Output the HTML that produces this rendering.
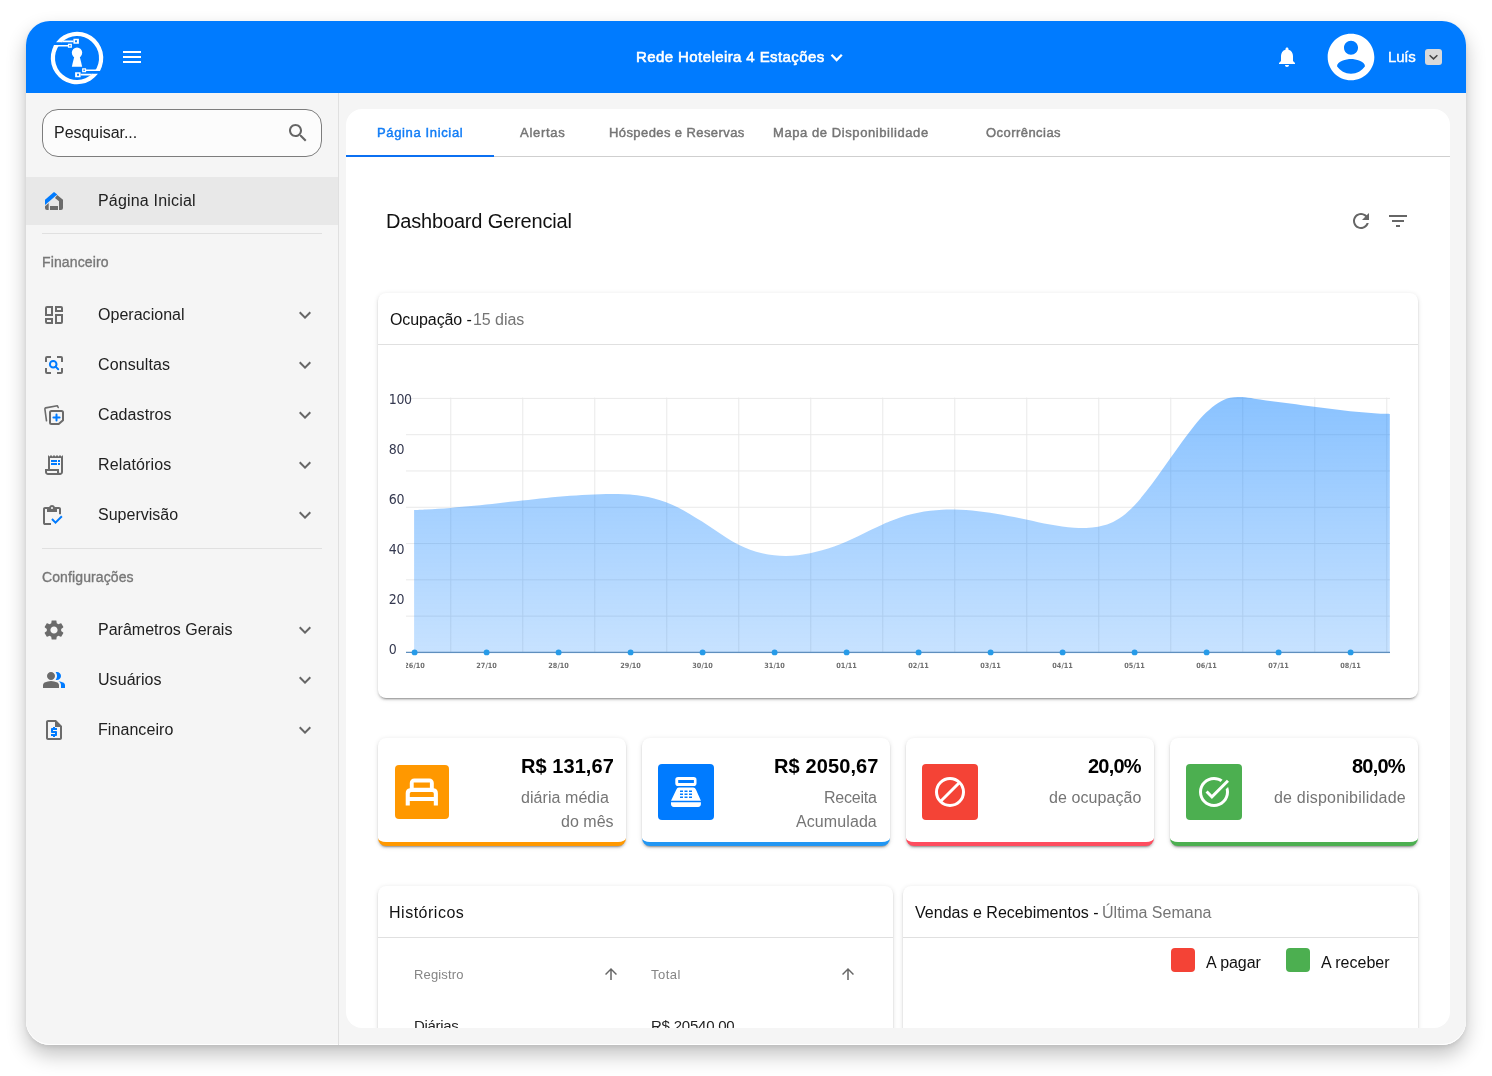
<!DOCTYPE html>
<html lang="pt-BR"><head><meta charset="utf-8"><title>Dashboard Gerencial</title>
<style>
html,body{margin:0;padding:0}
body{width:1492px;height:1076px;overflow:hidden;background:#fff;position:relative;font-family:"Liberation Sans",Arial,sans-serif;color:#212121}
.win{position:absolute;left:26px;top:21px;width:1440px;height:1024px;border-radius:24px;overflow:hidden;background:#f5f5f5;box-shadow:inset 0 -1px 0 #fff}
.shadow{position:absolute;left:26px;top:21px;width:1440px;height:1024px;border-radius:24px;box-shadow:0 10px 20px rgba(0,0,0,.24),0 2px 4px rgba(0,0,0,.08)}
.a{position:absolute}
.t{will-change:transform;position:absolute;white-space:nowrap;line-height:1;margin:0;font-weight:400}
.ic{position:absolute;display:block;overflow:visible}
.pb{display:inline-block;width:0;height:0}
.gs{will-change:transform}
</style></head>
<body>
<div class="shadow"></div>
<div class="win">
<header class="a" style="left:0px;top:0px;width:1440px;height:72px;background:#007bff"><svg class="ic" style="left:20.75px;top:6.5px;width:60px;height:60px" viewBox="-30 -30 60 60"><g fill="#fff"><path d="M-20.92 -15.85A26.25 26.25 0 0 1 22.83 12.96L17.78 12.96A22.0 22.0 0 0 0 -15.26 -15.85Z"/><path d="M-15.76 -15.85L-13.24 -17.57H-3.5V-15.85Z"/><path fill-rule="evenodd" d="M-3.6-19.3h5.5v5.1h-5.5zM-1.95-17.7v1.9h1.9v-1.9z"/><path d="M8.8 11.5H23.6L22.83 12.96H8.8Z"/><path fill-rule="evenodd" d="M5.1 10.35h4v3.8h-4zM6.45 11.6v1.3h1.3v-1.3z"/><g transform="rotate(180)"><path d="M-20.92 -15.85A26.25 26.25 0 0 1 22.83 12.96L17.78 12.96A22.0 22.0 0 0 0 -15.26 -15.85Z"/><path d="M-15.76 -15.85L-13.24 -17.57H-3.5V-15.85Z"/><path fill-rule="evenodd" d="M-3.6-19.3h5.5v5.1h-5.5zM-1.95-17.7v1.9h1.9v-1.9z"/><path d="M8.8 11.5H23.6L22.83 12.96H8.8Z"/><path fill-rule="evenodd" d="M5.1 10.35h4v3.8h-4zM6.45 11.6v1.3h1.3v-1.3z"/></g><circle cx="0" cy="-5.2" r="5.2"/><path d="M-2.7-1.5h5.4L5.2 8.65H-5.2Z"/></g></svg><svg class="ic" style="left:94px;top:24px;width:24px;height:24px" viewBox="0 0 24 24" ><path d="M3 18h18v-2H3v2zm0-5h18v-2H3v2zm0-7v2h18V6H3z" fill="#fff"/></svg><span class="t" style="left:610px;top:28px;font-size:15px;color:#fff;letter-spacing:0.41px;-webkit-text-stroke:0.6px currentColor">Rede Hoteleira 4 Estações</span><svg class="ic" style="left:802px;top:29px;width:18px;height:16px" viewBox="828 50 18 16"><path d="M831.5 54.7l5.15 5.3 5.15-5.3" fill="none" stroke="#fff" stroke-width="2.3"/></svg><svg class="ic" style="left:1249px;top:24px;width:24px;height:24px" viewBox="0 0 24 24" ><path d="M12 22c1.100 0 2-.9 2-2h-4c0 1.100.89 2 2 2zm6-6v-5c0-3.070-1.640-5.640-4.500-6.320V4c0-.83-.67-1.500-1.500-1.500s-1.500.67-1.500 1.500v.68C7.630 5.360 6 7.920 6 11v5l-2 2v1h16v-1l-2-2z" fill="#fff"/></svg><svg class="ic" style="left:1297px;top:8px;width:56px;height:56px" viewBox="0 0 24 24" ><path d="M12 2C6.480 2 2 6.480 2 12s4.480 10 10 10 10-4.480 10-10S17.520 2 12 2zm0 3c1.660 0 3 1.340 3 3s-1.340 3-3 3-3-1.340-3-3 1.340-3 3-3zm0 14.200c-2.500 0-4.710-1.280-6-3.220.03-1.990 4-3.080 6-3.080 1.990 0 5.970 1.090 6 3.080-1.290 1.940-3.500 3.220-6 3.220z" fill="#fff"/></svg><span class="t" style="left:1362px;top:28px;font-size:15px;color:#fff;letter-spacing:-0.21px;-webkit-text-stroke:0.4px currentColor">Luís</span><div class="a" style="left:1399px;top:28px;width:17px;height:16px;background:#d9d9d9;border-radius:3px"><svg class="ic" style="left:0;top:0;width:17px;height:16px" viewBox="0 0 17 16"><path d="M4.6 6.3l3.9 3.6 3.9-3.6" fill="none" stroke="#444" stroke-width="1.5"/></svg></div></header><nav class="a" style="left:0px;top:72px;width:313px;height:952px;border-right:1px solid #e0e0e0;box-sizing:border-box"><div class="a" style="left:16px;top:16px;width:280px;height:48px;border:1px solid #7d7d7d;border-radius:16px;background:#fcfcfc;box-sizing:border-box"></div><span class="t" style="left:28px;top:32px;font-size:16px;color:#212121;letter-spacing:-0.04px">Pesquisar...</span><svg class="ic" style="left:260.2px;top:28.3px;width:24px;height:24px" viewBox="0 0 24 24" ><path d="M15.500 14h-.79l-.28-.27C15.410 12.590 16 11.110 16 9.500 16 5.910 13.090 3 9.500 3S3 5.910 3 9.500 5.910 16 9.500 16c1.610 0 3.090-.59 4.230-1.570l.27.28v.79l5 4.990L20.490 19l-4.990-5zm-6 0C7.010 14 5 11.990 5 9.500S7.010 5 9.500 5 14 7.010 14 9.500 11.990 14 9.500 14z" fill="#666"/></svg><div class="a" style="left:0px;top:84px;width:312px;height:48px;background:#e8e8e8"></div><svg class="ic" style="left:16px;top:96px;width:24px;height:24px" viewBox="0 0 24 24" ><path fill="#007bff" d="M3 15.9V10.7L12 3l3.25 2.6Z"/><path fill="#6b6b6b" d="M15.2 6.1L21 10.7V19a2 2 0 0 1-2 2h-2V12.3L13 9Z"/><path fill="#6b6b6b" d="M3 17.2l3.7-3.1V21H5a2 2 0 0 1-2-2Z"/><path fill="#6b6b6b" d="M8 17h8v4H8Z"/></svg><span class="t" style="left:72px;top:100px;font-size:16px;color:#212121;letter-spacing:0.19px">Página Inicial</span><div class="a" style="left:16px;top:140px;width:280px;height:1px;background:#e0e0e0"></div><span class="t" style="left:16px;top:162px;font-size:14px;color:#777;letter-spacing:0.13px;-webkit-text-stroke:0.35px currentColor">Financeiro</span><svg class="ic" style="left:16.15px;top:210.1px;width:24px;height:24px" viewBox="0 0 24 24" ><path fill="none" stroke="#6b6b6b" stroke-width="2" d="M10 4H5a1 1 0 0 0-1 1v7h6Z"/><path fill="none" stroke="#6b6b6b" stroke-width="2" d="M14 4h5a1 1 0 0 1 1 1v3h-6Z"/><path fill="none" stroke="#6b6b6b" stroke-width="2" d="M14 12h6v7a1 1 0 0 1-1 1h-5Z"/><path fill="none" stroke="#6b6b6b" stroke-width="2" d="M4 16h6v4H5a1 1 0 0 1-1-1Z"/></svg><span class="t" style="left:72px;top:214px;font-size:16px;color:#212121;letter-spacing:0.03px">Operacional</span><svg class="ic" style="left:267px;top:209.8px;width:24px;height:24px" viewBox="0 0 24 24" ><path d="M16.590 8.590L12 13.170 7.410 8.590 6 10l6 6 6-6z" fill="#666"/></svg><svg class="ic" style="left:16.15px;top:260.1px;width:24px;height:24px" viewBox="0 0 24 24" ><path fill="none" stroke="#6b6b6b" stroke-width="2" d="M4 9V5a1 1 0 0 1 1-1h4M15 4h4a1 1 0 0 1 1 1v4M20 15v4a1 1 0 0 1-1 1h-4M9 20H5a1 1 0 0 1-1-1v-4"/><circle cx="11.2" cy="11.2" r="3.3" fill="none" stroke="#007bff" stroke-width="2"/><path d="M13.600 13.600l2.600 2.600" fill="none" stroke="#007bff" stroke-width="2" stroke-linecap="round"/></svg><span class="t" style="left:72px;top:264px;font-size:16px;color:#212121;letter-spacing:0.12px">Consultas</span><svg class="ic" style="left:267px;top:259.8px;width:24px;height:24px" viewBox="0 0 24 24" ><path d="M16.590 8.590L12 13.170 7.410 8.590 6 10l6 6 6-6z" fill="#666"/></svg><svg class="ic" style="left:16px;top:310.1px;width:24px;height:24px" viewBox="0 0 24 24" ><path fill="none" stroke="#6b6b6b" stroke-width="2" stroke-linejoin="round" d="M9.500 8H19.500a1.500 1.500 0 0 1 1.500 1.500V17.200L16.700 21H9.500A1.500 1.500 0 0 1 8 19.500V9.500A1.500 1.500 0 0 1 9.500 8Z"/><path fill="none" stroke="#6b6b6b" stroke-width="1.600" stroke-linecap="round" stroke-linejoin="round" d="M16.200 4.500L15.300 2.700 3.700 4.900a1 1 0 0 0-.8 1.200L4.500 17.800"/><path fill="none" stroke="#007bff" stroke-width="2" stroke-linecap="round" d="M14.500 11.400v6.200M11.400 14.500h6.200"/></svg><span class="t" style="left:72px;top:314px;font-size:16px;color:#212121;letter-spacing:0.08px">Cadastros</span><svg class="ic" style="left:267px;top:309.8px;width:24px;height:24px" viewBox="0 0 24 24" ><path d="M16.590 8.590L12 13.170 7.410 8.590 6 10l6 6 6-6z" fill="#666"/></svg><svg class="ic" style="left:16.15px;top:360.15px;width:24px;height:24px" viewBox="0 0 24 24" ><path d="M19.500 3.500L18 2l-1.500 1.500L15 2l-1.500 1.500L12 2l-1.500 1.500L9 2 7.500 3.500 6 2v14H3v3c0 1.660 1.340 3 3 3h12c1.660 0 3-1.340 3-3V2l-1.500 1.500zM15 20H6c-.55 0-1-.45-1-1v-1h10v2zm4-1c0 .55-.45 1-1 1s-1-.45-1-1v-3H8V5h11v14z" fill="#6b6b6b"/><path d="M9 7h6v2H9zM16 7h2v2h-2zM9 10h6v2H9zM16 10h2v2h-2z" fill="#007bff"/></svg><span class="t" style="left:72px;top:364px;font-size:16px;color:#212121;letter-spacing:0.14px">Relatórios</span><svg class="ic" style="left:267px;top:359.8px;width:24px;height:24px" viewBox="0 0 24 24" ><path d="M16.590 8.590L12 13.170 7.410 8.590 6 10l6 6 6-6z" fill="#666"/></svg><svg class="ic" style="left:14.1px;top:410.7px;width:24px;height:24px" viewBox="0 -960 960 960" ><path d="M840-552h-80v-208h-80v120H280v-120h-80v560h240v80H200q-33 0-56.500-23.500T120-200v-560q0-33 23.500-56.500T200-840h167q11-35 43-57.500t70-22.500q40 0 71.500 22.500T594-840h166q33 0 56.500 23.500T840-760v208ZM480-760q17 0 28.500-11.500T520-800q0-17-11.500-28.500T480-840q-17 0-28.500 11.500T440-800q0 17 11.500 28.500T480-760Z" fill="#6b6b6b"/><path d="M620-163 450-333l56-56 114 114 226-226 56 56-282 282Z" fill="#007bff"/></svg><span class="t" style="left:72px;top:414px;font-size:16px;color:#212121;letter-spacing:0.01px">Supervisão</span><svg class="ic" style="left:267px;top:409.8px;width:24px;height:24px" viewBox="0 0 24 24" ><path d="M16.590 8.590L12 13.170 7.410 8.590 6 10l6 6 6-6z" fill="#666"/></svg><svg class="ic" style="left:16px;top:525px;width:24px;height:24px" viewBox="0 0 24 24" ><path d="M19.140 12.940c.04-.3.06-.61.06-.94 0-.32-.02-.64-.07-.94l2.030-1.580c.18-.14.23-.41.12-.61l-1.920-3.320c-.12-.22-.37-.29-.59-.22l-2.390.96c-.5-.38-1.030-.7-1.620-.94l-.36-2.540c-.04-.24-.24-.41-.48-.41h-3.840c-.24 0-.43.17-.47.41l-.36 2.540c-.59.24-1.130.57-1.620.94l-2.390-.96c-.22-.08-.47 0-.59.22L2.740 8.870c-.12.21-.08.47.12.61l2.030 1.580c-.05.3-.09.63-.09.94s.02.64.07.94l-2.030 1.580c-.18.14-.23.41-.12.61l1.920 3.320c.12.22.37.29.59.22l2.390-.96c.5.38 1.030.7 1.620.94l.36 2.540c.05.24.24.41.48.41h3.840c.24 0 .44-.17.47-.41l.36-2.540c.59-.24 1.130-.56 1.620-.94l2.390.96c.22.08.47 0 .59-.22l1.920-3.320c.12-.22.07-.47-.12-.61l-2.010-1.580zM12 15.600c-1.980 0-3.600-1.620-3.600-3.600s1.620-3.600 3.600-3.600 3.600 1.620 3.600 3.600-1.620 3.600-3.600 3.600z" fill="#6b6b6b"/></svg><span class="t" style="left:72px;top:529px;font-size:16px;color:#212121;letter-spacing:0.01px">Parâmetros Gerais</span><svg class="ic" style="left:267px;top:524.8px;width:24px;height:24px" viewBox="0 0 24 24" ><path d="M16.590 8.590L12 13.170 7.410 8.590 6 10l6 6 6-6z" fill="#666"/></svg><svg class="ic" style="left:16.1px;top:575px;width:24px;height:24px" viewBox="0 -960 960 960" ><path d="M40-160v-112q0-34 17.500-62.500T104-378q62-31 126-46.500T360-440q66 0 130 15.500T616-378q29 15 46.500 43.500T680-272v112H40ZM360-480q-66 0-113-47t-47-113q0-66 47-113t113-47q66 0 113 47t47 113q0 66-47 113t-113 47Z" fill="#6b6b6b"/><path d="M760-160v-120q0-44-24.500-84.500T666-434q51 6 96 20.500t84 35.500q36 20 55 44.500t19 53.500v120H760ZM760-640q0 66-47 113t-113 47q-11 0-28-2.500t-28-5.500q27-32 41.500-71t14.500-81q0-42-14.500-81T544-792q14-5 28-6.500t28-1.500q66 0 113 47t47 113Z" fill="#007bff"/></svg><span class="t" style="left:72px;top:579px;font-size:16px;color:#212121;letter-spacing:0.06px">Usuários</span><svg class="ic" style="left:267px;top:574.8px;width:24px;height:24px" viewBox="0 0 24 24" ><path d="M16.590 8.590L12 13.170 7.410 8.590 6 10l6 6 6-6z" fill="#666"/></svg><svg class="ic" style="left:16.1px;top:625.15px;width:24px;height:24px" viewBox="0 0 24 24" ><path d="M14 2H6c-1.100 0-2 .9-2 2v16c0 1.100.9 2 2 2h12c1.100 0 2-.9 2-2V8l-6-6zM6 20V4h7v5h5v11H6z" fill="#6b6b6b"/><path d="M11 19h2v-1h1c.55 0 1-.45 1-1v-3c0-.55-.45-1-1-1h-3v-1h4v-2h-2V9h-2v1h-1c-.55 0-1 .45-1 1v3c0 .55.45 1 1 1h3v1H9v2h2v1z" fill="#007bff"/></svg><span class="t" style="left:72px;top:629px;font-size:16px;color:#212121;letter-spacing:0.07px">Financeiro</span><svg class="ic" style="left:267px;top:624.8px;width:24px;height:24px" viewBox="0 0 24 24" ><path d="M16.590 8.590L12 13.170 7.410 8.590 6 10l6 6 6-6z" fill="#666"/></svg><div class="a" style="left:16px;top:455px;width:280px;height:1px;background:#e0e0e0"></div><span class="t" style="left:16px;top:477px;font-size:14px;color:#777;letter-spacing:0.11px;-webkit-text-stroke:0.35px currentColor">Configurações</span></nav><main class="a" style="left:320px;top:88px;width:1104px;height:919px;background:#fff;border-radius:16px;overflow:hidden"><div class="a" style="left:0px;top:47px;width:1104px;height:1px;background:#cfcfcf"></div><div class="a" style="left:0px;top:46px;width:148px;height:2px;background:#0b70f2"></div><span class="t" style="left:31px;top:17px;font-size:13px;color:#127df6;letter-spacing:0.64px;-webkit-text-stroke:0.45px currentColor">Página Inicial</span><span class="t" style="left:174px;top:17px;font-size:13px;color:#757575;letter-spacing:0.72px;-webkit-text-stroke:0.45px currentColor">Alertas</span><span class="t" style="left:263px;top:17px;font-size:13px;color:#757575;letter-spacing:0.41px;-webkit-text-stroke:0.45px currentColor">Hóspedes e Reservas</span><span class="t" style="left:427px;top:17px;font-size:13px;color:#757575;letter-spacing:0.58px;-webkit-text-stroke:0.45px currentColor">Mapa de Disponibilidade</span><span class="t" style="left:640px;top:17px;font-size:13px;color:#757575;letter-spacing:0.45px;-webkit-text-stroke:0.45px currentColor">Ocorrências</span><h1 class="t" style="left:40px;top:102px;font-size:20px;color:#111;letter-spacing:-0.17px">Dashboard Gerencial</h1><svg class="ic" style="left:1003px;top:100px;width:24px;height:24px" viewBox="0 0 24 24" ><path d="M17.650 6.350C16.200 4.900 14.210 4 12 4c-4.420 0-7.990 3.580-7.990 8s3.570 8 7.990 8c3.730 0 6.840-2.550 7.730-6h-2.080c-.82 2.330-3.040 4-5.650 4-3.310 0-6-2.690-6-6s2.690-6 6-6c1.660 0 3.140.69 4.220 1.780L13 11h7V4l-2.350 2.350z" fill="#666"/></svg><svg class="ic" style="left:1040px;top:100px;width:24px;height:24px" viewBox="0 0 24 24" ><path d="M10 18h4v-2h-4v2zM3 6v2h18V6H3zm3 7h12v-2H6v2z" fill="#666"/></svg><section class="a" style="left:32px;top:184px;width:1040px;height:405px;background:#fff;border-radius:8px;box-shadow:0 3px 1px -2px rgba(0,0,0,.2),0 2px 2px 0 rgba(0,0,0,.14),0 1px 5px 0 rgba(0,0,0,.12)"><span class="t" style="left:12px;top:19px;font-size:16px;color:#111;letter-spacing:-0.1px">Ocupação -</span><span class="t" style="left:95px;top:19px;font-size:16px;color:#757575;letter-spacing:-0.04px">15 dias</span><div class="a" style="left:0px;top:51px;width:1040px;height:1px;background:#e0e0e0"></div><svg class="ic gs" style="left:0px;top:52px;width:1040px;height:353px" viewBox="378 345 1040 353"><defs><linearGradient id="ga" gradientUnits="userSpaceOnUse" x1="0" y1="397" x2="0" y2="652"><stop offset="0" stop-color="#007bff" stop-opacity=".46"/><stop offset="1" stop-color="#007bff" stop-opacity=".22"/></linearGradient><clipPath id="cl"><rect x="406" y="655" width="1000" height="20"/></clipPath></defs><path d="M406 398.4H1390M406 434.69H1390M406 470.98H1390M406 507.27H1390M406 543.56H1390M406 579.85H1390M406 616.14H1390M406 652.43H1390M450.8 397.600V652.400M522.8 397.600V652.400M594.8 397.600V652.400M666.8 397.600V652.400M738.8 397.600V652.400M810.8 397.600V652.400M882.8 397.600V652.400M954.8 397.600V652.400M1026.8 397.600V652.400M1098.8 397.600V652.400M1170.8 397.600V652.400M1242.8 397.600V652.400M1314.8 397.600V652.400M1386.8 397.600V652.400" fill="none" stroke="#e9e9e9" stroke-width="1"/><path d="M414.1 510.08C416.1 509.99 422.1 509.76 426.1 509.55C430.1 509.33 434.1 509.08 438.1 508.81C442.1 508.53 446.1 508.22 450.1 507.9C454.1 507.57 458.1 507.21 462.1 506.84C466.1 506.47 470.1 506.08 474.1 505.68C478.1 505.27 482.1 504.85 486.1 504.43C490.1 504 494.1 503.56 498.1 503.13C502.1 502.69 506.1 502.24 510.1 501.8C514.1 501.36 518.1 500.92 522.1 500.48C526.1 500.05 530.1 499.62 534.1 499.2C538.1 498.78 542.1 498.37 546.1 497.99C550.1 497.6 554.1 497.22 558.1 496.87C562.1 496.51 566.1 496.18 570.1 495.87C574.1 495.57 578.1 495.29 582.1 495.04C586.1 494.79 590.1 494.56 594.1 494.39C598.1 494.21 602.1 494.05 606.1 493.98C610.1 493.91 614.1 493.88 618.1 493.99C622.1 494.09 626.1 494.27 630.1 494.62C634.1 494.96 638.1 495.41 642.1 496.07C646.1 496.72 650.1 497.51 654.1 498.54C658.1 499.57 662.1 500.76 666.1 502.25C670.1 503.73 674.1 505.46 678.1 507.45C682.1 509.43 686.1 511.8 690.1 514.15C694.1 516.5 698.1 519.01 702.1 521.55C706.1 524.09 710.1 526.74 714.1 529.38C718.1 532.03 722.1 534.93 726.1 537.43C730.1 539.94 734.1 542.37 738.1 544.41C742.1 546.45 746.1 548.19 750.1 549.67C754.1 551.15 758.1 552.34 762.1 553.28C766.1 554.23 770.1 554.9 774.1 555.34C778.1 555.78 782.1 555.97 786.1 555.95C790.1 555.93 794.1 555.68 798.1 555.24C802.1 554.8 806.1 554.14 810.1 553.33C814.1 552.51 818.1 551.5 822.1 550.34C826.1 549.19 830.1 547.86 834.1 546.41C838.1 544.96 842.1 543.35 846.1 541.64C850.1 539.94 854.1 538.07 858.1 536.19C862.1 534.31 866.1 532.29 870.1 530.37C874.1 528.46 878.1 526.49 882.1 524.7C886.1 522.92 890.1 521.16 894.1 519.65C898.1 518.13 902.1 516.77 906.1 515.61C910.1 514.44 914.1 513.48 918.1 512.66C922.1 511.85 926.1 511.22 930.1 510.73C934.1 510.24 938.1 509.91 942.1 509.71C946.1 509.5 950.1 509.45 954.1 509.5C958.1 509.55 962.1 509.74 966.1 510.01C970.1 510.29 974.1 510.68 978.1 511.14C982.1 511.6 986.1 512.16 990.1 512.77C994.1 513.37 998.1 514.07 1002.1 514.79C1006.1 515.52 1010.1 516.31 1014.1 517.11C1018.1 517.91 1022.1 518.77 1026.1 519.61C1030.1 520.45 1034.1 521.34 1038.1 522.16C1042.1 522.98 1046.1 523.81 1050.1 524.53C1054.1 525.25 1058.1 525.93 1062.1 526.46C1066.1 526.99 1070.1 527.44 1074.1 527.7C1078.1 527.95 1082.1 528.12 1086.1 527.97C1090.1 527.83 1094.1 527.59 1098.1 526.81C1102.1 526.03 1106.1 525.02 1110.1 523.31C1114.1 521.6 1118.1 519.48 1122.1 516.55C1126.1 513.62 1130.1 509.89 1134.1 505.73C1138.1 501.58 1142.1 496.64 1146.1 491.62C1150.1 486.6 1154.1 481.12 1158.1 475.61C1162.1 470.11 1166.1 464.26 1170.1 458.59C1174.1 452.93 1178.1 447.08 1182.1 441.63C1186.1 436.18 1190.1 430.74 1194.1 425.91C1198.1 421.07 1202.1 416.44 1206.1 412.61C1210.1 408.78 1214.1 405.37 1218.1 402.9C1222.1 400.43 1226.1 398.76 1230.1 397.79C1234.1 396.82 1238.1 396.93 1242.1 397.08C1246.1 397.22 1250.1 398.11 1254.1 398.66C1258.1 399.2 1262.1 399.82 1266.1 400.38C1270.1 400.93 1274.1 401.46 1278.1 401.99C1282.1 402.52 1286.1 403.04 1290.1 403.58C1294.1 404.11 1298.1 404.65 1302.1 405.19C1306.1 405.73 1310.1 406.27 1314.1 406.8C1318.1 407.33 1322.1 407.85 1326.1 408.36C1330.1 408.86 1334.1 409.36 1338.1 409.82C1342.1 410.29 1346.1 410.74 1350.1 411.15C1354.1 411.57 1358.1 411.96 1362.1 412.3C1366.1 412.65 1370.1 412.96 1374.1 413.22C1378.1 413.49 1383.48 413.74 1386.1 413.87C1388.72 414 1389.18 413.99 1389.8 414.01V653.300H414.100Z" fill="url(#ga)"/><path d="M406 652.400H1390" stroke="#5f8fbe" stroke-width="1.300" fill="none"/><circle cx="414.6" cy="652.400" r="2.950" fill="#279be8"/><circle cx="486.6" cy="652.400" r="2.950" fill="#279be8"/><circle cx="558.6" cy="652.400" r="2.950" fill="#279be8"/><circle cx="630.6" cy="652.400" r="2.950" fill="#279be8"/><circle cx="702.6" cy="652.400" r="2.950" fill="#279be8"/><circle cx="774.6" cy="652.400" r="2.950" fill="#279be8"/><circle cx="846.6" cy="652.400" r="2.950" fill="#279be8"/><circle cx="918.6" cy="652.400" r="2.950" fill="#279be8"/><circle cx="990.6" cy="652.400" r="2.950" fill="#279be8"/><circle cx="1062.6" cy="652.400" r="2.950" fill="#279be8"/><circle cx="1134.6" cy="652.400" r="2.950" fill="#279be8"/><circle cx="1206.6" cy="652.400" r="2.950" fill="#279be8"/><circle cx="1278.6" cy="652.400" r="2.950" fill="#279be8"/><circle cx="1350.6" cy="652.400" r="2.950" fill="#279be8"/><g font-family='"DejaVu Sans Condensed","DejaVu Sans",sans-serif' font-size="14" letter-spacing="-.3" fill="#353950"><text x="388.700" y="403.8">100</text><text x="388.700" y="453.83">80</text><text x="388.700" y="503.86">60</text><text x="388.700" y="553.89">40</text><text x="388.700" y="603.92">20</text><text x="388.700" y="653.95">0</text></g><g clip-path="url(#cl)" font-family='"DejaVu Sans Condensed","DejaVu Sans",sans-serif' font-size="7.25" font-weight="700" fill="#707070" text-anchor="middle"><text x="414.6" y="668.300">26/10</text><text x="486.6" y="668.300">27/10</text><text x="558.6" y="668.300">28/10</text><text x="630.6" y="668.300">29/10</text><text x="702.6" y="668.300">30/10</text><text x="774.6" y="668.300">31/10</text><text x="846.6" y="668.300">01/11</text><text x="918.6" y="668.300">02/11</text><text x="990.6" y="668.300">03/11</text><text x="1062.6" y="668.300">04/11</text><text x="1134.6" y="668.300">05/11</text><text x="1206.6" y="668.300">06/11</text><text x="1278.6" y="668.300">07/11</text><text x="1350.6" y="668.300">08/11</text></g></svg></section><section class="a" style="left:32px;top:629px;width:248px;height:108px;background:#fff;border-radius:8px;border-bottom:4px solid #ff9800;box-sizing:border-box;box-shadow:0 3px 1px -2px rgba(0,0,0,.2),0 2px 2px 0 rgba(0,0,0,.14),0 1px 5px 0 rgba(0,0,0,.12)"><div class="a" style="left:17px;top:27px;width:54px;height:54px;background:#ff9800;border-radius:4px"><svg class="ic" style="left:0;top:0;width:54px;height:54px" viewBox="395.200 765.200 54 54"><path fill="#fff" fill-rule="evenodd" d="M410 783.100a4.500 4.500 0 0 1 4.500-4.500h15a4.500 4.500 0 0 1 4.500 4.500v5.400a5 5 0 0 1 4.100 4.900v12.300h-4.100v-4.500h-24v4.500h-4.100v-12.300a5 5 0 0 1 4.100-4.900zM413.900 782.800v5.100h16.200v-5.100zM411.500 792.300a1.500 1.500 0 0 0-1.500 1.500v3.300h24v-3.300a1.500 1.500 0 0 0-1.500-1.500z"/></svg></div><span class="t" style="left:143px;top:18px;font-size:20px;font-weight:700;color:#000;letter-spacing:0.06px">R$ 131,67</span><span class="t" style="left:143px;top:52px;font-size:16px;color:#757575;letter-spacing:0.06px">diária média</span><span class="t" style="left:183px;top:76px;font-size:16px;color:#757575;letter-spacing:0.02px">do mês</span></section><section class="a" style="left:296px;top:629px;width:248px;height:108px;background:#fff;border-radius:8px;border-bottom:4px solid #2196f3;box-sizing:border-box;box-shadow:0 3px 1px -2px rgba(0,0,0,.2),0 2px 2px 0 rgba(0,0,0,.14),0 1px 5px 0 rgba(0,0,0,.12)"><div class="a" style="left:16px;top:26px;width:56px;height:56px;background:#007bff;border-radius:4px"><svg class="ic" style="left:0;top:0;width:56px;height:56px" viewBox="0 0 56 56"><path fill="#fff" fill-rule="evenodd" d="M20.100 13h15.600a2.800 2.800 0 0 1 2.800 2.800v3.500a2.800 2.800 0 0 1-2.800 2.800H20.100a2.800 2.800 0 0 1-2.800-2.800v-3.500a2.800 2.800 0 0 1 2.800-2.800zM20.200 16v3h15.700v-3zM20.900 23.400H35.100Q37.300 23.400 37.900 25.400L42.900 36.800H13L18.400 25.400Q19 23.400 20.900 23.400zM22 26.4h3v1.600h-3zM22 29.5h3v1.600h-3zM22 32.5h3v1.600h-3zM26.5 26.4h3v1.600h-3zM26.5 29.5h3v1.600h-3zM26.5 32.5h3v1.600h-3zM31 26.4h3v1.600h-3zM31 29.5h3v1.600h-3zM31 32.5h3v1.600h-3zM13 38.300h29.900v1.800a2.800 2.800 0 0 1-2.800 2.800H15.800a2.800 2.800 0 0 1-2.800-2.800z"/></svg></div><span class="t" style="left:132px;top:18px;font-size:20px;font-weight:700;color:#000;letter-spacing:0.11px">R$ 2050,67</span><span class="t" style="left:182px;top:52px;font-size:16px;color:#757575;letter-spacing:-0.22px">Receita</span><span class="t" style="left:154px;top:76px;font-size:16px;color:#757575;letter-spacing:0.09px">Acumulada</span></section><section class="a" style="left:560px;top:629px;width:248px;height:108px;background:#fff;border-radius:8px;border-bottom:4px solid #fe4c5e;box-sizing:border-box;box-shadow:0 3px 1px -2px rgba(0,0,0,.2),0 2px 2px 0 rgba(0,0,0,.14),0 1px 5px 0 rgba(0,0,0,.12)"><div class="a" style="left:16px;top:26px;width:56px;height:56px;background:#f44336;border-radius:4px"><svg class="ic" style="left:10px;top:10px;width:36px;height:36px" viewBox="0 0 24 24"><circle cx="12" cy="12" r="9" fill="none" stroke="#fff" stroke-width="2"/><path d="M5.640 18.360L18.360 5.640" stroke="#fff" stroke-width="2"/></svg></div><span class="t" style="left:182px;top:18px;font-size:20px;font-weight:700;color:#000;letter-spacing:-0.8px">20,0%</span><span class="t" style="left:143px;top:52px;font-size:16px;color:#757575;letter-spacing:0.07px">de ocupação</span></section><section class="a" style="left:824px;top:629px;width:248px;height:108px;background:#fff;border-radius:8px;border-bottom:4px solid #4caf50;box-sizing:border-box;box-shadow:0 3px 1px -2px rgba(0,0,0,.2),0 2px 2px 0 rgba(0,0,0,.14),0 1px 5px 0 rgba(0,0,0,.12)"><div class="a" style="left:16px;top:26px;width:56px;height:56px;background:#4caf50;border-radius:4px"><svg class="ic" style="left:10px;top:10px;width:36px;height:36px" viewBox="0 0 24 24"><path fill="#fff" d="M22 5.180L10.590 16.600l-4.240-4.240 1.410-1.410 2.830 2.830 10-10L22 5.180zm-2.210 5.040c.13.57.21 1.170.21 1.780 0 4.420-3.580 8-8 8s-8-3.580-8-8 3.580-8 8-8c1.580 0 3.040.46 4.280 1.250l1.440-1.440C16.100 2.670 14.130 2 12 2 6.480 2 2 6.480 2 12s4.480 10 10 10 10-4.480 10-10c0-1.190-.22-2.330-.6-3.390l-1.610 1.610z"/></svg></div><span class="t" style="left:182px;top:18px;font-size:20px;font-weight:700;color:#000;letter-spacing:-0.79px">80,0%</span><span class="t" style="left:104px;top:52px;font-size:16px;color:#757575;letter-spacing:0.21px">de disponibilidade</span></section><section class="a" style="left:32px;top:777px;width:515px;height:300px;background:#fff;border-radius:8px;box-shadow:0 3px 1px -2px rgba(0,0,0,.2),0 2px 2px 0 rgba(0,0,0,.14),0 1px 5px 0 rgba(0,0,0,.12)"><span class="t" style="left:11px;top:19px;font-size:16px;color:#111;letter-spacing:0.51px">Históricos</span><div class="a" style="left:0px;top:51px;width:515px;height:1px;background:#e0e0e0"></div><span class="t" style="left:36px;top:82px;font-size:13px;color:#858585;letter-spacing:0.15px">Registro</span><span class="t" style="left:273px;top:82px;font-size:13px;color:#858585;letter-spacing:0.46px">Total</span><svg class="ic" style="left:224px;top:79px;width:18px;height:18px" viewBox="0 0 24 24" ><path d="M4 12l1.410 1.410L11 7.830V20h2V7.830l5.580 5.590L20 12l-8-8-8 8z" fill="#666"/></svg><svg class="ic" style="left:461.2px;top:79px;width:18px;height:18px" viewBox="0 0 24 24" ><path d="M4 12l1.410 1.410L11 7.830V20h2V7.830l5.580 5.590L20 12l-8-8-8 8z" fill="#666"/></svg><span class="t" style="left:36px;top:132px;font-size:15px;color:#222;letter-spacing:-0.33px">Diárias</span><span class="t" style="left:273px;top:132px;font-size:15px;color:#222;letter-spacing:-0.22px">R$ 20540,00</span></section><section class="a" style="left:557px;top:777px;width:515px;height:300px;background:#fff;border-radius:8px;box-shadow:0 3px 1px -2px rgba(0,0,0,.2),0 2px 2px 0 rgba(0,0,0,.14),0 1px 5px 0 rgba(0,0,0,.12)"><span class="t" style="left:12px;top:19px;font-size:16px;color:#111;letter-spacing:0.02px">Vendas e Recebimentos -</span><span class="t" style="left:199px;top:19px;font-size:16px;color:#757575;letter-spacing:0.01px">Última Semana</span><div class="a" style="left:0px;top:51px;width:515px;height:1px;background:#e0e0e0"></div><div class="a" style="left:268.3px;top:62px;width:23.5px;height:24px;background:#f44336;border-radius:4px"></div><span class="t" style="left:303px;top:69px;font-size:16px;color:#111;letter-spacing:-0.05px">A pagar</span><div class="a" style="left:383.3px;top:62px;width:23.5px;height:24px;background:#4caf50;border-radius:4px"></div><span class="t" style="left:418px;top:69px;font-size:16px;color:#111;letter-spacing:0.01px">A receber</span></section></main>
</div>
</body></html>
